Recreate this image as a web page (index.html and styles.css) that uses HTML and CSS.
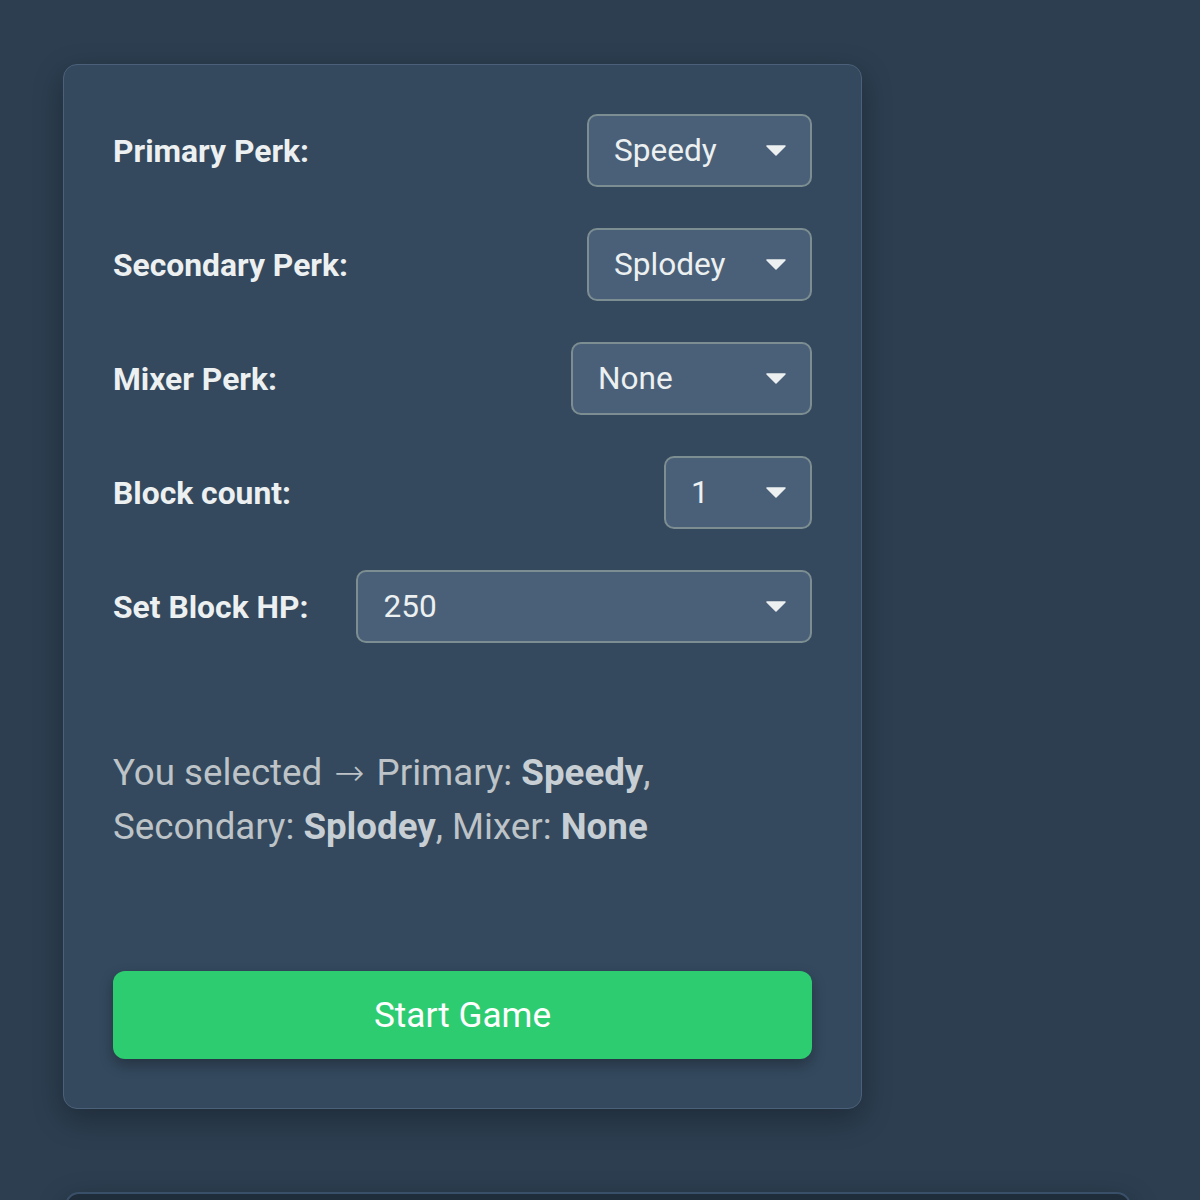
FILE: index.html
```html
<!DOCTYPE html>
<html lang="en">
<head>
<meta charset="utf-8">
<title>Perk Setup</title>
<link rel="stylesheet" href="styles.css">
</head>
<body>
<main class="page">
  <section class="card">
    <div class="rows">
      <div class="row">
        <label class="label">Primary Perk:</label>
        <div class="select w-perk"><span class="value">Speedy</span><svg class="arrow" width="20" height="11" viewBox="0 0 20 11"><path d="M1 1 L19 1 L10 10 Z" fill="#ecf0f1" stroke="#ecf0f1" stroke-width="1.5" stroke-linejoin="round"/></svg></div>
      </div>
      <div class="row">
        <label class="label">Secondary Perk:</label>
        <div class="select w-perk"><span class="value">Splodey</span><svg class="arrow" width="20" height="11" viewBox="0 0 20 11"><path d="M1 1 L19 1 L10 10 Z" fill="#ecf0f1" stroke="#ecf0f1" stroke-width="1.5" stroke-linejoin="round"/></svg></div>
      </div>
      <div class="row">
        <label class="label">Mixer Perk:</label>
        <div class="select w-mixer"><span class="value">None</span><svg class="arrow" width="20" height="11" viewBox="0 0 20 11"><path d="M1 1 L19 1 L10 10 Z" fill="#ecf0f1" stroke="#ecf0f1" stroke-width="1.5" stroke-linejoin="round"/></svg></div>
      </div>
      <div class="row">
        <label class="label">Block count:</label>
        <div class="select w-count"><span class="value">1</span><svg class="arrow" width="20" height="11" viewBox="0 0 20 11"><path d="M1 1 L19 1 L10 10 Z" fill="#ecf0f1" stroke="#ecf0f1" stroke-width="1.5" stroke-linejoin="round"/></svg></div>
      </div>
      <div class="row row-wide">
        <label class="label">Set Block HP:</label>
        <div class="select w-fill"><span class="value">250</span><svg class="arrow" width="20" height="11" viewBox="0 0 20 11"><path d="M1 1 L19 1 L10 10 Z" fill="#ecf0f1" stroke="#ecf0f1" stroke-width="1.5" stroke-linejoin="round"/></svg></div>
      </div>
    </div>
    <p class="summary">You selected <span class="sep">→</span> Primary: <strong>Speedy</strong>, Secondary: <strong>Splodey</strong>, Mixer: <strong>None</strong></p>
    <button class="start">Start Game</button>
  </section>
  <section class="board"></section>
</main>
</body>
</html>
```

FILE: styles.css
```css
html, body {
  margin: 0;
  padding: 0;
}
body {
  background: #2c3e50;
  font-family: Roboto, "Liberation Sans", Arial, sans-serif;
  color: #ecf0f1;
  height: 1200px;
  overflow: hidden;
}
.page {
  padding: 64px 0 0 63px;
}
.card {
  box-sizing: border-box;
  width: 799px;
  background: #34495e;
  border: 1px solid #4b617a;
  border-radius: 14px;
  padding: 49px;
  box-shadow: 0 10px 30px rgba(0, 0, 0, 0.3);
}
.rows {
  display: flex;
  flex-direction: column;
  gap: 41px;
}
.row {
  display: flex;
  align-items: center;
  justify-content: space-between;
  height: 73px;
}
.row-wide {
  gap: 48px;
}
.label {
  font-weight: 700;
  font-size: 31.8px;
  color: #ecf0f1;
  white-space: nowrap;
}
.select {
  box-sizing: border-box;
  height: 73px;
  display: flex;
  align-items: center;
  justify-content: space-between;
  padding: 0 24px 0 25px;
  background: #4a6078;
  border: 2px solid #7d8e92;
  border-radius: 10px;
  font-size: 31.6px;
  color: #ecf0f1;
}
.w-perk { width: 225px; }
.w-mixer { width: 241px; }
.w-count { width: 148px; }
.w-fill { flex: 1; }
.arrow {
  display: block;
  flex: none;
}
.summary {
  margin: 103px 0 0 0;
  font-size: 36.7px;
  line-height: 54px;
  color: #bdc3c7;
  max-width: 600px;
}
.sep {
  font-family: "DejaVu Sans", sans-serif;
  font-weight: 200;
  font-size: 36px;
  line-height: 1;
  margin: 0 3px;
}
.summary strong {
  font-weight: 700;
  color: #c7cfd4;
}
.start {
  display: block;
  width: 100%;
  height: 88px;
  margin-top: 117px;
  border: none;
  border-radius: 12px;
  background: #2ecc71;
  color: #ffffff;
  font-family: Roboto, "Liberation Sans", Arial, sans-serif;
  font-size: 35.2px;
  box-shadow: 0 6px 14px rgba(0, 0, 0, 0.3);
}
.board {
  box-sizing: border-box;
  width: 1066px;
  height: 300px;
  margin: 83px 0 0 2px;
  background: #1f2c3a;
  border: 2px solid #3a5069;
  border-radius: 14px;
  box-shadow: 0 10px 30px rgba(0, 0, 0, 0.3);
}
```
